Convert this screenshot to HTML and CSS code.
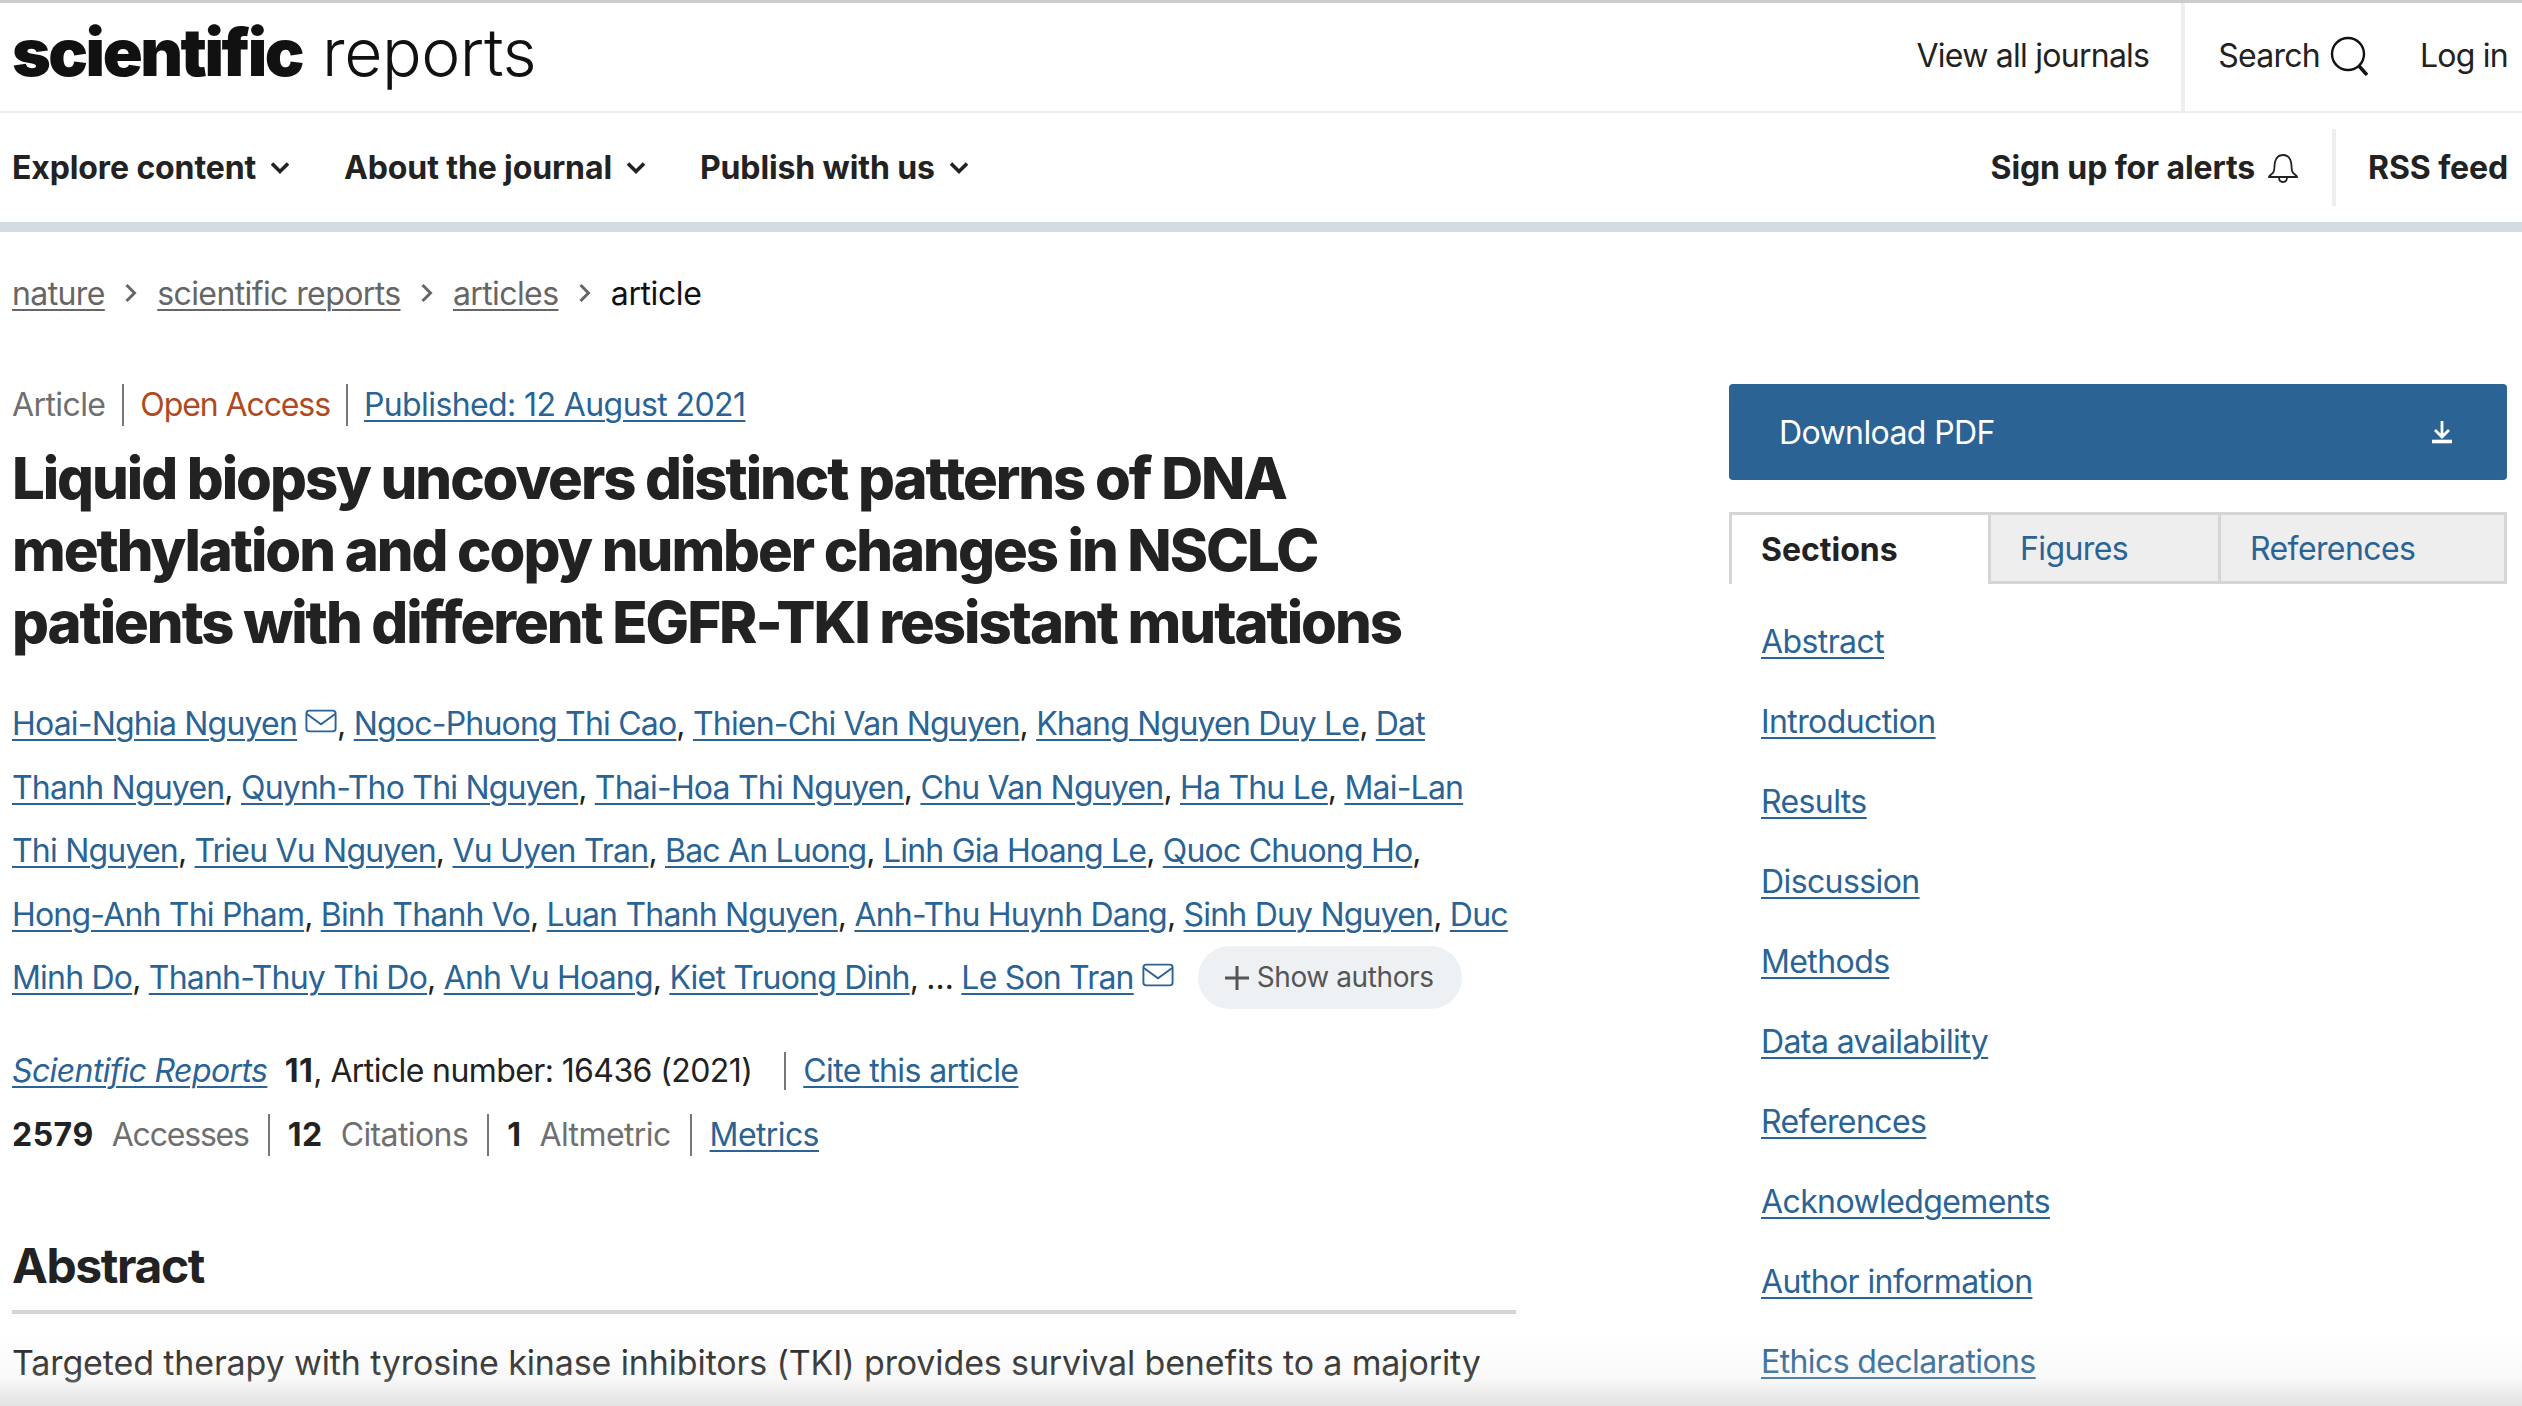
FILE: index.html
```html
<!DOCTYPE html>
<html lang="en">
<head>
<meta charset="utf-8">
<title>Liquid biopsy uncovers distinct patterns of DNA methylation</title>
<link rel="stylesheet" href="styles.css">
</head>
<body>
<header class="masthead">
  <div class="topbar">
    <a class="logo"><b>scientific</b> <span>reports</span></a>
    <nav class="toplinks">
      <a class="toplink journals">View all journals</a>
      <a class="toplink search">Search
        <svg class="i-search" viewBox="0 0 40 40" width="40" height="40"><circle cx="18" cy="18" r="16" fill="none" stroke="#111" stroke-width="2.400"/><path d="M29 30l8 9" fill="none" stroke="#111" stroke-width="3.400"/></svg>
      </a>
      <a class="toplink login">Log in</a>
    </nav>
  </div>
  <div class="subbar">
    <nav class="menus">
      <a class="menu">Explore content <svg class="chev" viewBox="0 0 20 14" width="20" height="14"><path d="M2 2.500l8 8 8-8" fill="none" stroke="#222" stroke-width="3.600"/></svg></a>
      <a class="menu">About the journal <svg class="chev" viewBox="0 0 20 14" width="20" height="14"><path d="M2 2.500l8 8 8-8" fill="none" stroke="#222" stroke-width="3.600"/></svg></a>
      <a class="menu">Publish with us <svg class="chev" viewBox="0 0 20 14" width="20" height="14"><path d="M2 2.500l8 8 8-8" fill="none" stroke="#222" stroke-width="3.600"/></svg></a>
    </nav>
    <div class="sublinks">
      <a class="menu alerts">Sign up for alerts
        <svg class="i-bell" viewBox="0 0 32 32" width="32" height="32"><path d="M2 25c0-1.500 3-2.500 4.500-5 1.500-3 .5-6 1.500-10 1-4 4-7 8-7s7 3 8 7c1 4 0 7 1.500 10 1.500 2.500 4.500 3.500 4.500 5z M12 25.500c0 6 8 6 8 0" fill="none" stroke="#222" stroke-width="1.800"/></svg>
      </a>
      <a class="menu rss">RSS feed</a>
    </div>
  </div>
  <div class="band"></div>
</header>

<nav class="crumbs">
  <a>nature</a><svg class="crumbsep" viewBox="0 0 14 20" width="14" height="20"><path d="M2.500 2l8 8-8 8" fill="none" stroke="#666" stroke-width="3"/></svg>
  <a>scientific reports</a><svg class="crumbsep" viewBox="0 0 14 20" width="14" height="20"><path d="M2.500 2l8 8-8 8" fill="none" stroke="#666" stroke-width="3"/></svg>
  <a>articles</a><svg class="crumbsep" viewBox="0 0 14 20" width="14" height="20"><path d="M2.500 2l8 8-8 8" fill="none" stroke="#666" stroke-width="3"/></svg>
  <span class="current">article</span>
</nav>

<div class="layout">
  <main class="article">
    <ul class="meta">
      <li class="muted">Article</li>
      <li class="oa">Open Access</li>
      <li><a class="link">Published: 12 August 2021</a></li>
    </ul>
    <h1 class="title">Liquid biopsy uncovers distinct patterns of DNA methylation and copy number changes in NSCLC patients with different EGFR-TKI resistant mutations</h1>
    <p class="authors"><a class="link">Hoai-Nghia Nguyen</a><svg class="i-mail" viewBox="0 0 34 26" width="32" height="25"><rect x="1.500" y="1.500" width="31" height="22" rx="3" fill="none" stroke="#2a6394" stroke-width="2"/><path d="M2 5l15 11L32 5" fill="none" stroke="#2a6394" stroke-width="2"/></svg>, <a class="link">Ngoc-Phuong Thi Cao</a>, <a class="link">Thien-Chi Van Nguyen</a>, <a class="link">Khang Nguyen Duy Le</a>, <a class="link">Dat<br>Thanh Nguyen</a>, <a class="link">Quynh-Tho Thi Nguyen</a>, <a class="link">Thai-Hoa Thi Nguyen</a>, <a class="link">Chu Van Nguyen</a>, <a class="link">Ha Thu Le</a>, <a class="link">Mai-Lan<br>Thi Nguyen</a>, <a class="link">Trieu Vu Nguyen</a>, <a class="link">Vu Uyen Tran</a>, <a class="link">Bac An Luong</a>, <a class="link">Linh Gia Hoang Le</a>, <a class="link">Quoc Chuong Ho</a>,<br><a class="link">Hong-Anh Thi Pham</a>, <a class="link">Binh Thanh Vo</a>, <a class="link">Luan Thanh Nguyen</a>, <a class="link">Anh-Thu Huynh Dang</a>, <a class="link">Sinh Duy Nguyen</a>, <a class="link">Duc<br>Minh Do</a>, <a class="link">Thanh-Thuy Thi Do</a>, <a class="link">Anh Vu Hoang</a>, <a class="link">Kiet Truong Dinh</a>, … <a class="link">Le Son Tran</a><svg class="i-mail" viewBox="0 0 34 26" width="32" height="25"><rect x="1.500" y="1.500" width="31" height="22" rx="3" fill="none" stroke="#2a6394" stroke-width="2"/><path d="M2 5l15 11L32 5" fill="none" stroke="#2a6394" stroke-width="2"/></svg><span class="showall"><svg class="i-plus" viewBox="0 0 26 26" width="26" height="26"><path d="M13 1v24M1 13h24" stroke="#555" stroke-width="3"/></svg>Show authors</span></p>
    <p class="cite"><a class="link italic">Scientific Reports</a> <b class="vol">11</b>, Article number: 16436 (2021)<span class="citebar"><a class="link">Cite this article</a></span></p>
    <ul class="stats">
      <li><b>2579</b><span>Accesses</span></li>
      <li><b>12</b><span>Citations</span></li>
      <li><b>1</b><span>Altmetric</span></li>
      <li><a class="link">Metrics</a></li>
    </ul>
    <section class="abstract">
      <h2 class="abstract-h">Abstract</h2>
      <p class="abstract-p">Targeted therapy with tyrosine kinase inhibitors (TKI) provides survival benefits to a majority</p>
    </section>
  </main>
  <aside class="side">
    <a class="download"><span>Download PDF</span><svg class="i-dl" viewBox="0 0 20 24" width="20" height="24"><path d="M10 1v15M3 10l7 7 7-7" fill="none" stroke="#fff" stroke-width="2.800"/><path d="M0 21.500h20" stroke="#fff" stroke-width="3.600"/></svg></a>
    <div class="tabs">
      <span class="tab active">Sections</span>
      <a class="tab fig">Figures</a>
      <a class="tab refs">References</a>
    </div>
    <ul class="toc">
      <li><a class="link">Abstract</a></li>
      <li><a class="link">Introduction</a></li>
      <li><a class="link">Results</a></li>
      <li><a class="link">Discussion</a></li>
      <li><a class="link">Methods</a></li>
      <li><a class="link">Data availability</a></li>
      <li><a class="link">References</a></li>
      <li><a class="link">Acknowledgements</a></li>
      <li><a class="link">Author information</a></li>
      <li><a class="link">Ethics declarations</a></li>
    </ul>
  </aside>
</div>
<div class="fade"></div>
</body>
</html>
```
FILE: styles.css
```css
* { box-sizing: border-box; }
html, body { margin: 0; height: 1406px; overflow: hidden; background: #fff; }
body { font-family: Inter, "Liberation Sans", sans-serif; font-size: 32px; letter-spacing: -0.6px; color: #222; position: relative; }
ul { list-style: none; margin: 0; padding: 0; }
p, h1, h2 { margin: 0; }

.masthead { border-top: 3px solid #ccc; }
.topbar { height: 110px; border-bottom: 2px solid #eee; display: flex; justify-content: space-between; padding: 0 14px 0 12px; }
.logo { font-size: 66px; line-height: 98px; color: #111; white-space: nowrap; }
.logo b { font-weight: 900; letter-spacing: -2.500px; }
.logo span { font-weight: 300; letter-spacing: -0.500px; margin-left: 2px; }
.toplinks { display: flex; align-items: stretch; letter-spacing: -0.75px; line-height: 106px; }
.toplink { display: flex; align-items: center; color: #222; padding-bottom: 2px; }
.journals { padding-right: 32px; border-right: 4px solid #eee; }
.search { padding-left: 33px; gap: 10px; }
.login { padding-left: 50px; }
.subbar { height: 109px; display: flex; justify-content: space-between; align-items: center; padding: 0 14px 0 12px; }
.menus { display: flex; gap: 54px; }
.menu { display: flex; align-items: center; font-weight: 700; letter-spacing: -0.12px; color: #222; gap: 0 14px; }
.sublinks { display: flex; align-items: center; }
.alerts { height: 77px; padding-right: 33px; border-right: 4px solid #eee; gap: 0 12px; }
.rss { padding-left: 32px; }
.band { height: 10px; background: #d3dce3; }

.crumbs { display: flex; align-items: center; height: 40px; margin: 41px 0 0 12px; color: #666; }
.crumbs a { text-decoration: underline; text-underline-offset: 4px; text-decoration-thickness: 2px; }
.crumbsep { margin: 0 19.200px; }
.current { color: #111; letter-spacing: -0.4px; }

.layout { display: flex; justify-content: space-between; padding: 0 15px 0 12px; }
.article { width: 1504px; }
.link { color: #2a6394; text-decoration: underline; text-decoration-thickness: 2px; text-underline-offset: 4px; }
.italic { font-style: italic; }

.meta { display: flex; align-items: stretch; margin-top: 71px; height: 42px; line-height: 42px; }
.meta li { padding: 0 16px; border-right: 2px solid #777; }
.meta li:first-child { padding-left: 0; padding-right: 17px; }
.meta li:last-child { border-right: 0; }
.muted { color: #6f6f6f; }
.oa { color: #b1491f; letter-spacing: -1.100px; }
.title { font-size: 58px; line-height: 72px; font-weight: 800; letter-spacing: -2.050px; margin-top: 16px; }
.authors { line-height: 63.500px; margin-top: 34px; letter-spacing: -0.8px; white-space: nowrap; }
.i-mail { margin-left: 8px; vertical-align: 1px; }
.showall { display: inline-flex; align-items: center; gap: 7px; height: 63px; padding: 0 28px 0 26px; margin-left: 24px; border-radius: 32px; background: #eef1f4; color: #555; font-size: 28px; letter-spacing: -0.4px; line-height: 63px; vertical-align: top; }
.cite { margin-top: 39px; line-height: 44px; }
b { letter-spacing: 0.5px; }
.vol { margin-left: 9px; }
.citebar { border-left: 2px solid #777; margin-left: 32px; padding-left: 17px; display: inline-block; line-height: 38px; }
.stats { display: flex; margin-top: 21px; line-height: 42px; }
.stats li { padding: 0 19px 0 18px; border-right: 2px solid #777; }
.stats li:first-child { padding-left: 0; }
.stats li:last-child { border-right: 0; }
.stats span { color: #6f6f6f; margin-left: 18px; }
.stats li:first-child span { letter-spacing: -1.200px; }
.abstract { margin-top: 81px; }
.abstract-h { font-size: 48px; line-height: 58px; font-weight: 700; letter-spacing: -1.400px; padding-bottom: 15px; border-bottom: 4px solid #d5d5d5; }
.abstract-p { margin-top: 25px; line-height: 48px; font-size: 34px; letter-spacing: -0.13px; }

.side { width: 778px; margin-top: 71px; }
.download { display: flex; justify-content: space-between; align-items: center; height: 96px; padding: 0 55px 0 50px; background: #2a6394; border-radius: 4px; color: #fff; }
.tabs { display: flex; height: 72px; margin-top: 32px; }
.tab { display: flex; align-items: center; padding-left: 29px; border: 3px solid #d5d5d5; background: #eee; color: #2a6394; }
.tab.active { width: 259px; background: #fff; color: #222; font-weight: 700; letter-spacing: 0; border-right: 0; border-bottom: 0; }
.tab.fig { width: 230px; border-right: 0; }
.tab.refs { flex: 1; }
.toc { padding-left: 32px; margin-top: 38px; }
.toc li { height: 80px; line-height: 40px; }

.fade { position: absolute; left: 0; right: 0; bottom: 0; height: 70px; background: linear-gradient(rgba(226,226,226,0), rgba(226,226,226,.22) 60%, #e2e2e2); pointer-events: none; }
```
